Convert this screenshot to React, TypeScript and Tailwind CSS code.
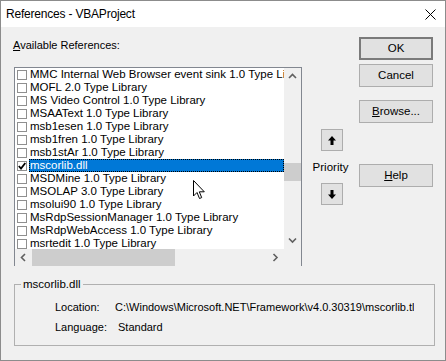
import React from "react";

const rows: { name: string; checked?: boolean; selected?: boolean }[] = [
  { name: "MMC Internal Web Browser event sink 1.0 Type Library" },
  { name: "MOFL 2.0 Type Library" },
  { name: "MS Video Control 1.0 Type Library" },
  { name: "MSAAText 1.0 Type Library" },
  { name: "msb1esen 1.0 Type Library" },
  { name: "msb1fren 1.0 Type Library" },
  { name: "msb1stAr 1.0 Type Library" },
  { name: "mscorlib.dll", checked: true, selected: true },
  { name: "MSDMine 1.0 Type Library" },
  { name: "MSOLAP 3.0 Type Library" },
  { name: "msolui90 1.0 Type Library" },
  { name: "MsRdpSessionManager 1.0 Type Library" },
  { name: "MsRdpWebAccess 1.0 Type Library" },
  { name: "msrtedit 1.0 Type Library" },
];

function Chevron({ dir }: { dir: "up" | "down" | "left" | "right" }) {
  const pts: Record<string, string> = {
    up: "1,6 4.5,2.5 8,6",
    down: "1,2.5 4.5,6 8,2.5",
    left: "6,1 2.5,4.5 6,8",
    right: "2.5,1 6,4.5 2.5,8",
  };
  return (
    <svg width="9" height="9" viewBox="0 0 9 9">
      <polyline points={pts[dir]} fill="none" stroke="#606060" strokeWidth="1.6" />
    </svg>
  );
}

function Arrow({ down }: { down?: boolean }) {
  return (
    <svg width="8" height="9" viewBox="0 0 8 9" style={down ? { transform: "rotate(180deg)" } : undefined}>
      <polygon points="4,0 8,4.5 5.5,4.5 5.5,9 2.5,9 2.5,4.5 0,4.5" fill="#000" />
    </svg>
  );
}

function Btn({ children, def }: { children: React.ReactNode; def?: boolean }) {
  return (
    <div
      className={
        "w-[74px] h-[23px] bg-[#e1e1e1] flex items-center justify-center text-[11.5px] text-black " +
        (def ? "border-2 border-[#7a7a7a]" : "border border-[#adadad]")
      }
    >
      {children}
    </div>
  );
}

export default function App() {
  return (
    <div className="w-[446px] h-[361px] border border-[#8c8c8c] bg-[#f0f0f0] flex flex-col overflow-hidden relative font-['Liberation_Sans',sans-serif] text-black">
      {/* title bar */}
      <div className="h-[26px] bg-white flex items-center justify-between pl-[5px] pr-[9px] shrink-0">
        <span className="text-[12px] tracking-[-0.2px]">References - VBAProject</span>
        <svg width="11" height="11" viewBox="0 0 11 11">
          <path d="M0.5 0.5 L10.5 10.5 M10.5 0.5 L0.5 10.5" stroke="#000" strokeWidth="1" />
        </svg>
      </div>

      <div className="flex flex-col pl-[12px] pr-[11px] flex-1">
        <div className="flex">
          {/* left column */}
          <div className="flex flex-col pt-[11px]">
            <div className="h-[14px] leading-[14px] text-[11px]">
              <span className="underline">A</span>vailable References:
            </div>
            <div className="mt-[15px] ml-[1px] w-[288px] h-[199px] border border-[#828790] bg-white flex flex-col">
              <div className="flex h-[181px]">
                <div className="w-[269px] h-[181px] overflow-hidden text-[11.5px]">
                  {rows.map((r) => (
                    <div key={r.name} className="h-[13px] flex items-center whitespace-nowrap">
                      <div className="ml-[2px] w-[10px] h-[10px] border border-[#8f8f8f] bg-white shrink-0 flex items-center justify-center">
                        {r.checked && (
                          <svg width="8" height="8" viewBox="0 0 8 8">
                            <polyline points="0.8,4 3,6.5 7.3,1" fill="none" stroke="#000" strokeWidth="1.8" />
                          </svg>
                        )}
                      </div>
                      <div
                        className={
                          "ml-[2px] h-[13px] leading-[13px] pl-[1px] " +
                          (r.selected
                            ? "flex-1 bg-[#0078d7] text-white outline outline-1 outline-dotted outline-black -outline-offset-1"
                            : "")
                        }
                      >
                        {r.name}
                      </div>
                    </div>
                  ))}
                </div>
                {/* vertical scrollbar */}
                <div className="w-[17px] h-[181px] bg-[#f0f0f0] flex flex-col items-center">
                  <div className="h-[17px] flex items-center justify-center">
                    <Chevron dir="up" />
                  </div>
                  <div className="w-full h-[147px] flex flex-col">
                    <div className="h-[78px]" />
                    <div className="w-full h-[18px] bg-[#cdcdcd]" />
                  </div>
                  <div className="h-[17px] flex items-center justify-center">
                    <Chevron dir="down" />
                  </div>
                </div>
              </div>
              {/* horizontal scrollbar */}
              <div className="flex h-[17px]">
                <div className="w-[269px] bg-[#f0f0f0] flex items-center">
                  <div className="w-[17px] flex justify-center">
                    <Chevron dir="left" />
                  </div>
                  <div className="w-[143px] h-[17px] bg-[#cdcdcd]" />
                  <div className="flex-1" />
                  <div className="w-[17px] flex justify-center">
                    <Chevron dir="right" />
                  </div>
                </div>
                <div className="w-[17px] bg-[#f0f0f0]" />
              </div>
            </div>
          </div>

          {/* middle column */}
          <div className="w-[57px] flex flex-col items-center pt-[102px]">
            <div className="w-[22px] h-[22px] ml-[2px] bg-[#e1e1e1] border border-[#adadad] flex items-center justify-center">
              <Arrow />
            </div>
            <div className="mt-[9px] h-[14px] leading-[14px] text-[11.5px]">Priority</div>
            <div className="mt-[9px] w-[22px] h-[22px] ml-[2px] bg-[#e1e1e1] border border-[#adadad] flex items-center justify-center">
              <Arrow down />
            </div>
          </div>

          {/* right column */}
          <div className="flex flex-col pt-[10px]">
            <Btn def>OK</Btn>
            <div className="mt-[4px]">
              <Btn>Cancel</Btn>
            </div>
            <div className="mt-[13px]">
              <Btn>
                <span>
                  <span className="underline">B</span>rowse...
                </span>
              </Btn>
            </div>
            <div className="mt-[41px]">
              <Btn>
                <span>
                  <span className="underline">H</span>elp
                </span>
              </Btn>
            </div>
          </div>
        </div>

        {/* group box */}
        <div className="mt-[18px] ml-[1px] w-[421px] h-[62px] border border-[#b0b0b0] relative text-[11px]">
          <span className="absolute -top-[8px] left-[6px] px-[2px] bg-[#f0f0f0] leading-[14px] text-[11.5px]">mscorlib.dll</span>
          <div className="flex flex-col pt-[15px] pl-[40px]">
            <div className="flex h-[14px] leading-[14px]">
              <span className="w-[60px]">Location:</span>
              <span className="w-[299px] overflow-hidden whitespace-nowrap">
                C:\Windows\Microsoft.NET\Framework\v4.0.30319\mscorlib.tlb
              </span>
            </div>
            <div className="flex h-[14px] leading-[14px] mt-[6px]">
              <span className="w-[63px]">Language:</span>
              <span>Standard</span>
            </div>
          </div>
        </div>
      </div>

      {/* mouse cursor */}
      <svg className="absolute left-[192px] top-[179px]" width="13" height="20" viewBox="0 0 13 20">
        <path d="M0.5 0.5 L0.5 16 L4 12.5 L6.5 18.5 L8.7 17.6 L6.3 11.8 L11.3 11.8 Z" fill="#fff" stroke="#000" strokeWidth="1" strokeLinejoin="round" />
      </svg>
    </div>
  );
}
